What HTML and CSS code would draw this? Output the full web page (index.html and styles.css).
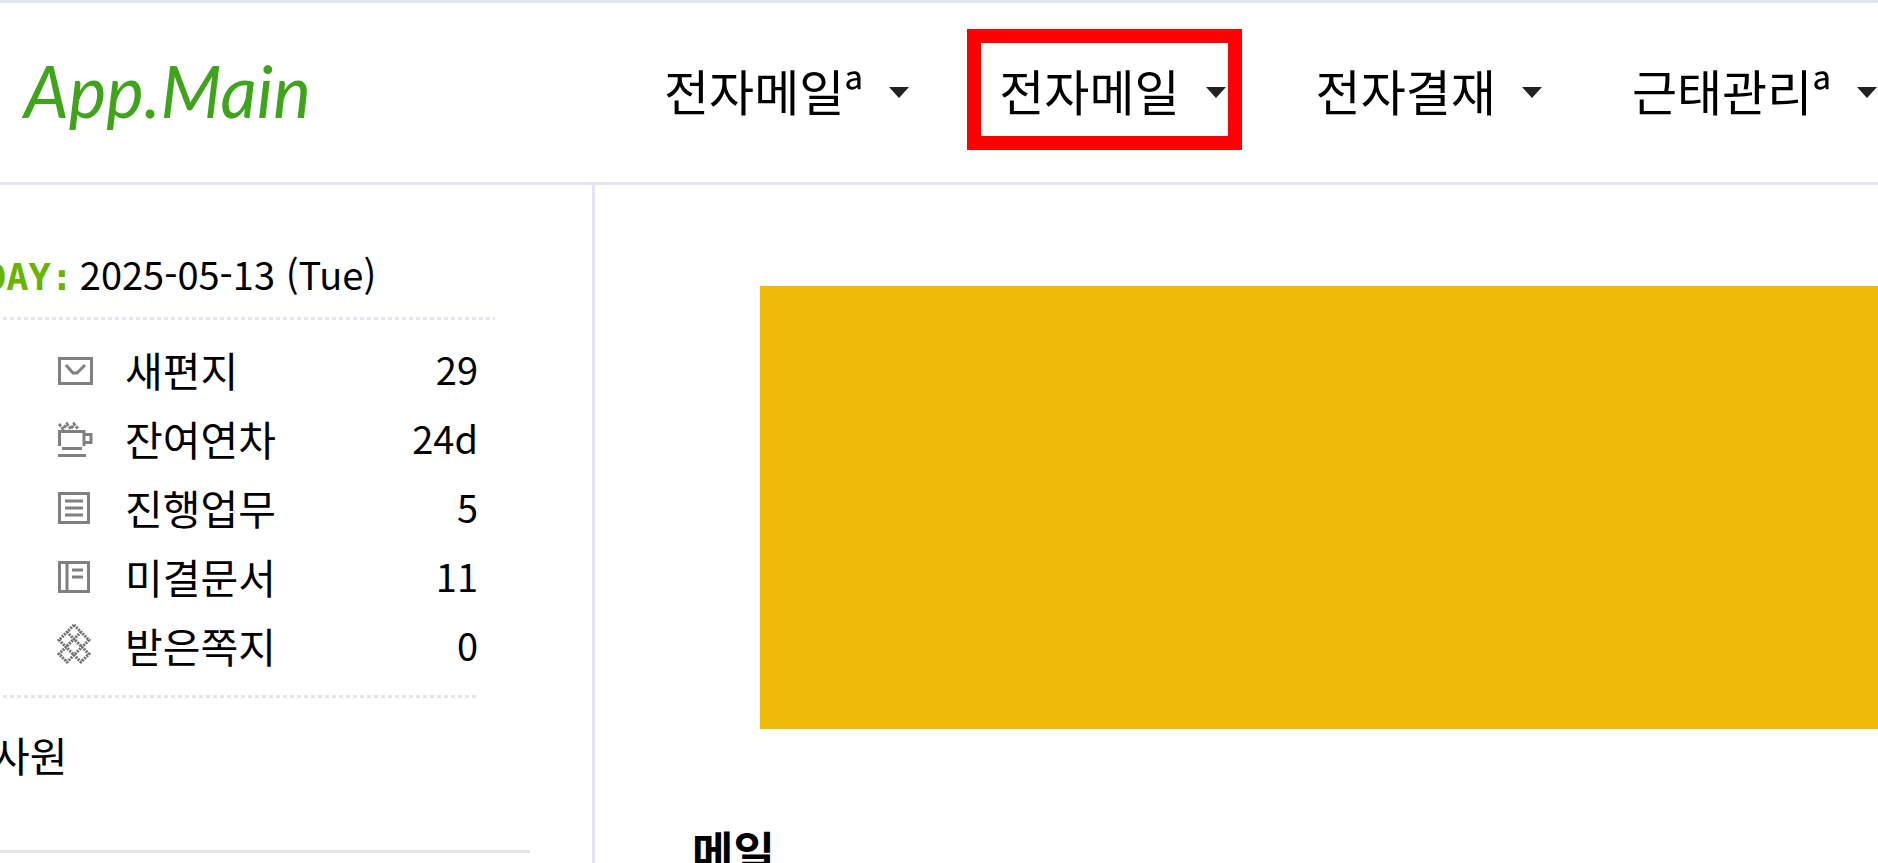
FILE: index.html
```html
<!DOCTYPE html>
<html lang="ko">
<head>
<meta charset="utf-8">
<title>App.Main</title>
<link rel="stylesheet" href="styles.css">
</head>
<body>
<header class="header">
  <a class="logo" href="#">App.Main</a>
  <nav class="menu">
    <button class="menu-item" type="button">전자메일ª<span class="caret"></span></button>
    <button class="menu-item marked" type="button">전자메일<span class="caret"></span></button>
    <button class="menu-item" type="button">전자결재<span class="caret"></span></button>
    <button class="menu-item" type="button">근태관리ª<span class="caret"></span></button>
  </nav>
</header>
<div class="body">
  <aside class="sidebar">
    <p class="today"><span class="today-label">DAY</span><span class="today-label colon">:</span><time datetime="2025-05-13">2025-05-13 (Tue)</time></p>
    <div class="dots"></div>
    <ul class="counts">
      <li><a href="#"><svg class="icon" viewBox="0 0 36 40"><path d="M1.500 7.500h32v25h-32z"/><path d="M8 14l7 8h4l8-8"/></svg><span class="name">새편지</span><span class="num">29</span></a></li>
      <li><a href="#"><svg class="icon" viewBox="0 0 36 40"><path d="M1.500 26V11.500h24.500V26M4 28.500h20M26 14.500h7v8h-7M0 35.500h28"/><path stroke-dasharray="3 1" d="M1 4l4 5 4-5 4 5 3-5 4 5"/></svg><span class="name">잔여연차</span><span class="num">24d</span></a></li>
      <li><a href="#"><svg class="icon" viewBox="0 1 36 40"><path d="M1.500 5.500h29v29h-29zM7 13h18M7 20h18M7 27h18"/></svg><span class="name">진행업무</span><span class="num">5</span></a></li>
      <li><a href="#"><svg class="icon" viewBox="0 1 36 40"><path d="M1.500 5.500h29v29h-29zM9 5v29M14 13h11M14 20h11"/></svg><span class="name">미결문서</span><span class="num">11</span></a></li>
      <li><a href="#"><svg class="icon fine" viewBox="0 3 36 40"><path d="M16 1L1 16l22 22 8-8L9 8M16 1l15 15L9 38l-8-8L23 8"/></svg><span class="name">받은쪽지</span><span class="num">0</span></a></li>
    </ul>
    <div class="dots short"></div>
    <p class="rank">사원</p>
    <hr class="rule">
  </aside>
  <main class="main">
    <div class="banner"></div>
    <h2 class="title">메일</h2>
  </main>
</div>
</body>
</html>
```
FILE: styles.css
```css
* { box-sizing: border-box; }
body {
  margin: 0;
  height: 100vh;
  overflow: hidden;
  display: flex;
  flex-direction: column;
  background: #fff;
  color: #000;
  font-family: "Noto Sans CJK KR", sans-serif;
}
.header {
  flex: none;
  display: flex;
  align-items: center;
  height: 185px;
  border-top: 3px solid #e2e4ef;
  border-bottom: 3px solid #e2e4ef;
}
.logo {
  flex: none;
  width: 664px;
  padding: 0 0 4px 24px;
  color: #3fa41c;
  font: italic 71px/80px Lato, sans-serif;
  text-decoration: none;
}
.menu { display: flex; gap: 90px; padding-bottom: 6px; }
.menu-item {
  flex: none;
  display: flex;
  align-items: center;
  gap: 26px;
  position: relative;
  padding: 0;
  border: 0;
  background: none;
  color: #000;
  font: 49px/72px "Noto Sans CJK KR", sans-serif;
  white-space: nowrap;
}
.caret {
  margin-top: 6px;
  border: 10px solid transparent;
  border-top: 11px solid #222;
  border-bottom: 0;
}
.marked::after {
  content: "";
  position: absolute;
  inset: -25px -16px -24px -32px;
  border: 14px solid #f00;
}
.body { flex: 1; display: flex; min-height: 0; }
.sidebar {
  flex: none;
  width: 595px;
  padding-top: 61px;
  border-right: 3px solid #e2e4ef;
  overflow: hidden;
}
.today {
  display: flex;
  align-items: baseline;
  margin: 0 0 11px -16px;
  font-size: 38px;
  line-height: 56px;
}
.today-label {
  color: #68b400;
  font-family: "DejaVu Sans Mono", monospace;
  font-size: 37px;
  font-weight: bold;
}
.colon { width: 29px; }
.dots {
  width: 495px;
  height: 3px;
  background: repeating-linear-gradient(90deg, transparent 0 3px, #e2e4ef 3px 7px);
}
.short { width: 479px; }
.counts {
  margin: 0;
  padding: 16px 114px 14px 58px;
  list-style: none;
}
.counts a {
  display: flex;
  align-items: center;
  height: 69px;
  color: #000;
  font-size: 41px;
  line-height: 60px;
  text-decoration: none;
}
.icon {
  width: 36px;
  height: 40px;
  margin-right: 31px;
  overflow: visible;
  fill: none;
  stroke: #808080;
  stroke-width: 3;
}
.fine { stroke: #707070; stroke-width: 3; stroke-dasharray: 2 1; }
.name, .num { padding-bottom: 4px; }
.num { margin-left: auto; font-size: 38px; }
.rank { margin: 24px 0 64px -8px; font-size: 41px; line-height: 64px; }
.rule { width: 530px; height: 3px; margin: 0; border: 0; background: #e2e4ef; }
.main { flex: 1; min-width: 0; padding-top: 101px; }
.banner { height: 443px; margin-left: 165px; background: #efb90a; }
.title { margin: 90px 0 0 97px; font-size: 45px; line-height: 64px; }
```
